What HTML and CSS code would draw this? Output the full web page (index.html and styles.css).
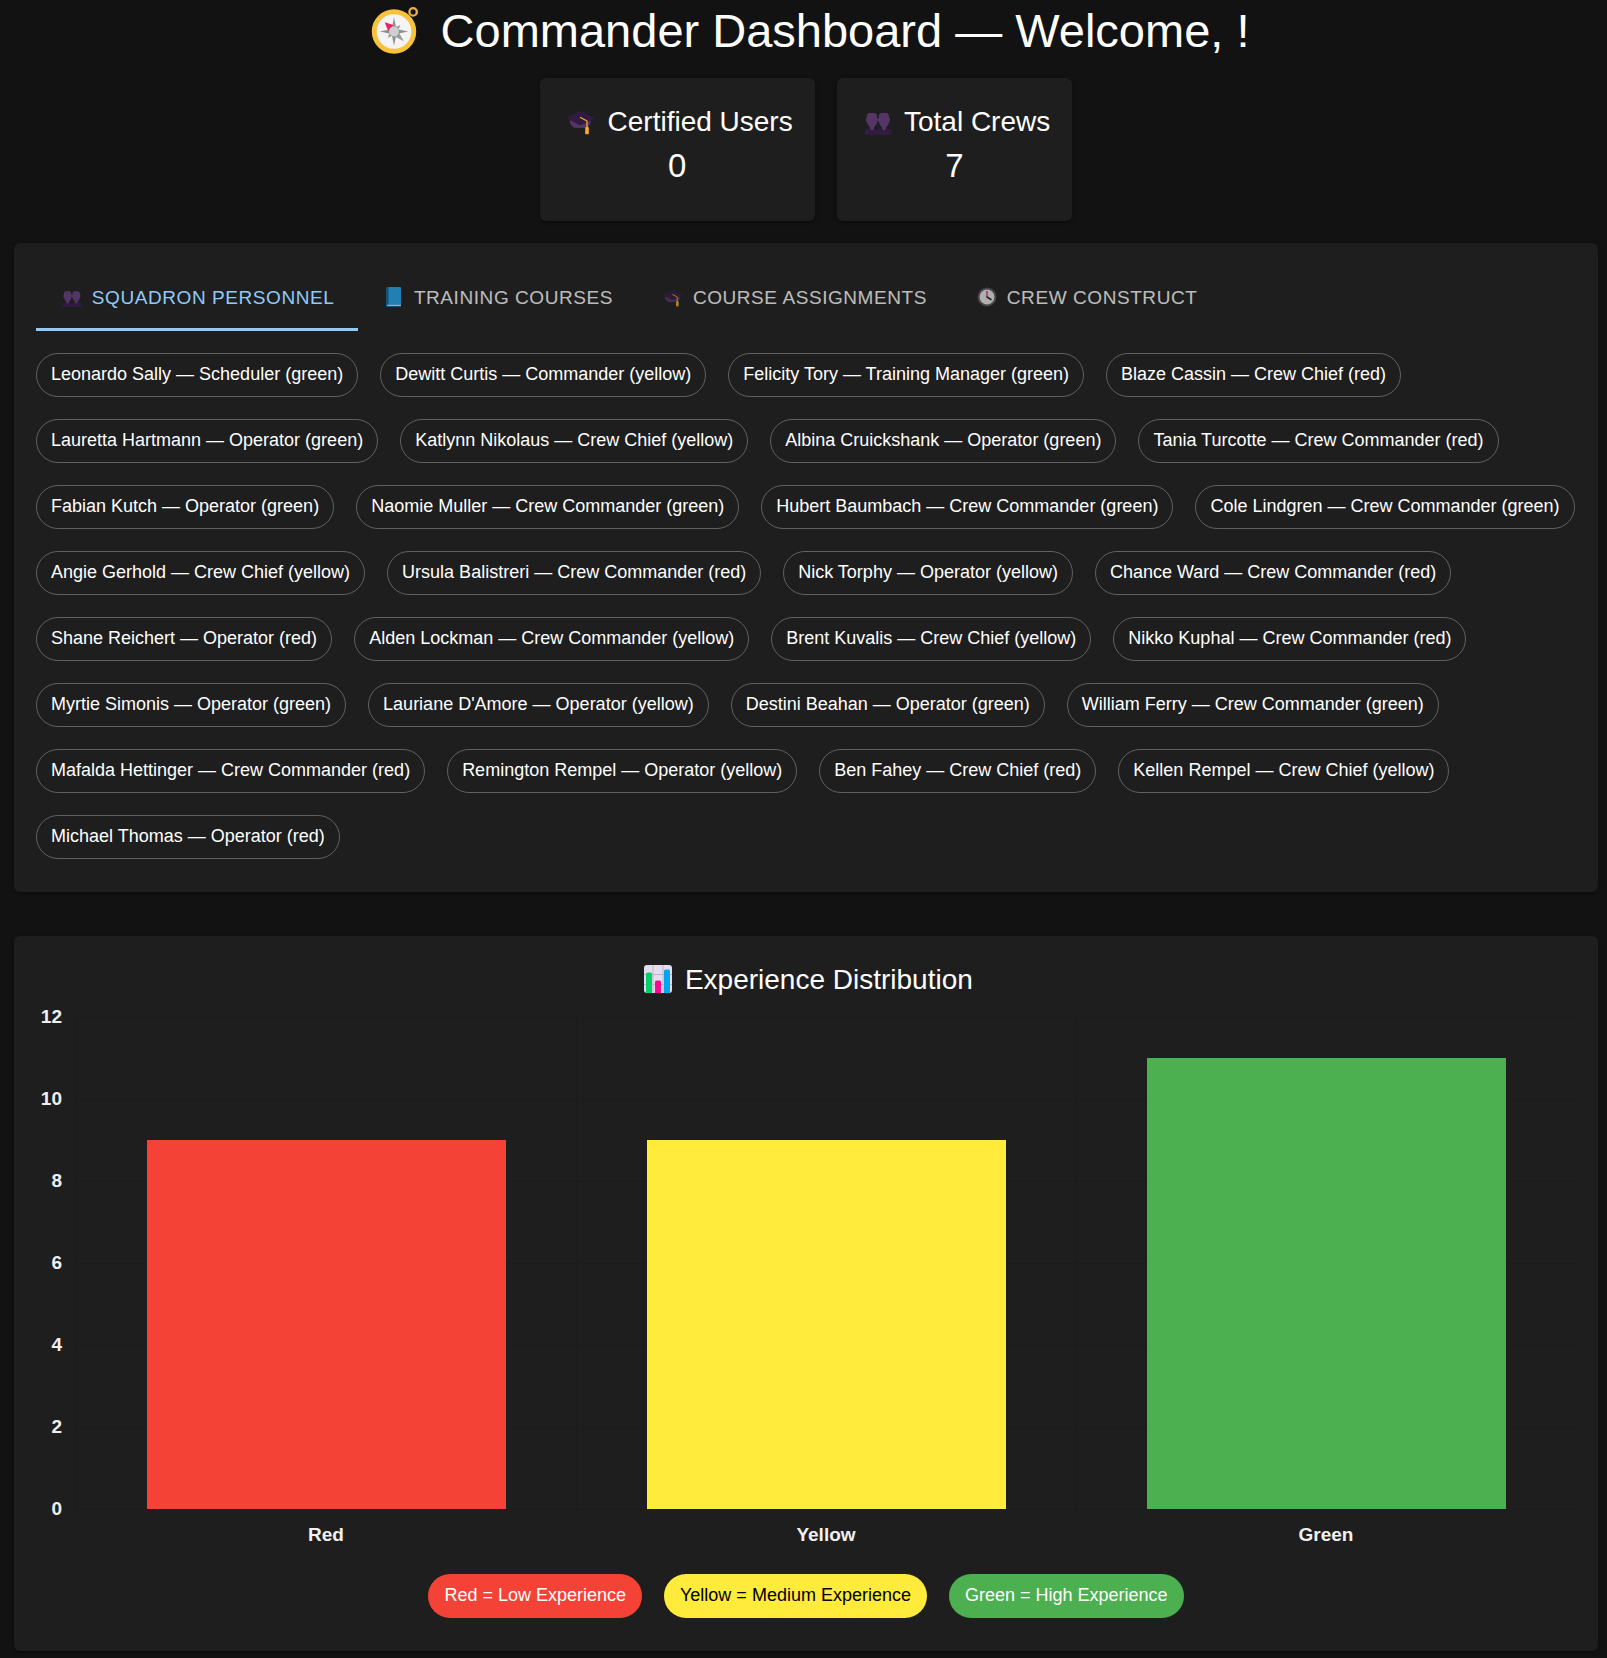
FILE: index.html
```html
<!DOCTYPE html>
<html lang="en">
<head>
<meta charset="utf-8">
<meta name="viewport" content="width=device-width, initial-scale=1">
<title>Commander Dashboard</title>
<link rel="stylesheet" href="styles.css">
</head>
<body>
<svg class="sprite" aria-hidden="true">
  <symbol id="compass" viewBox="0 0 48 48">
    <circle cx="43" cy="5" r="3.800" fill="none" stroke="#e9b040" stroke-width="2.400"/>
    <circle cx="23.500" cy="25" r="20.200" fill="#f4f4f4" stroke="#f9c23c" stroke-width="5"/>
    <path d="M23.500 10.500l2.200 11-2.200 3.500-2.200-3.500zM38 25l-11 2.200L23.500 25l3.500-2.200zM23.500 39.500l-2.200-11 2.200-3.500 2.200 3.500zM9 25l11-2.200 3.500 2.200-3.500 2.200z" fill="#8f8f8f"/>
    <path d="M30 18.500l-2.500 6-3.500-3.500zM33.500 35l-9-5 4-4zM17 31.500l2.500-6 3.500 3.500z" fill="#9b9b9b"/>
    <path d="M14 15.500l9 3-5.500 6z" fill="#e92765"/>
    <circle cx="23.500" cy="25" r="5" fill="#cfcfcf"/>
  </symbol>
  <symbol id="cap" viewBox="0 0 28 28">
    <path d="M3 12h20.500v4.500c-1.500 3-4 4.500-7 4.500h-6.500c-3.500 0-6-2-7-5.500z" fill="#533566"/>
    <path d="M12 4.500q1.500-.8 3 0l12.500 6q.5.500 0 1L15.500 17.500q-2 1-4 0L0 11.500q-.5-.5 0-1z" fill="#321b41"/>
    <path d="M13.500 10.500l6.500 3.500v8" fill="none" stroke="#f9a833" stroke-width="1.300" stroke-linecap="round" stroke-linejoin="round"/>
    <rect x="18.200" y="20" width="3.600" height="7.200" rx="1" fill="#fcab2f"/>
  </symbol>
  <symbol id="people" viewBox="0 0 28 28">
    <path d="M.5 28v-3c0-2.200 1.500-3.500 4-3.500h4.500l5 1 5-1h4.500c2.500 0 4 1.300 4 3.500v3z" fill="#321b41"/>
    <path id="head" d="M4.500 6h6.500c1.500.5 2.200 2.500 2.200 5 1.200.6 1.200 3.200 0 3.800-.4 2.700-1.700 4.400-3.200 5.400v1.500L8 23.500l-2-1.800v-1.500c-1.500-1-2.800-2.700-3.200-5.400-1.500-.6-1.500-3.200 0-3.800-.3-2.500.2-4.300 1.700-5z" fill="#533566"/>
    <use href="#head" x="12"/>
  </symbol>
  <symbol id="book" viewBox="0 0 20 20">
    <rect x="2" y="0" width="15" height="20" rx="1" fill="#15629a"/>
    <path d="M4.500 0H16a1 1 0 0 1 1 1v17H4.500z" fill="#23a8f2"/>
    <path d="M3 17.800h14v1.200H3z" fill="#e8dfec"/>
  </symbol>
  <symbol id="clock" viewBox="0 0 20 20">
    <circle cx="10" cy="10" r="8.500" fill="#ececec" stroke="#58535c" stroke-width="2"/>
    <path d="M10 4v6" stroke="#e92765" stroke-width="1.300"/>
    <path d="M10 10l4 2.500" stroke="#212121" stroke-width="1.500" stroke-linecap="round"/>
  </symbol>
  <symbol id="chart" viewBox="0 0 28 28">
    <rect width="28" height="28" rx="3" fill="#e6dcef"/>
    <path d="M9 0v28M19 0v28M0 9.500h28M0 19.500h28" stroke="#bfb3c9" stroke-width="1"/>
    <path d="M2 9q0-1.500 1.500-1.500h3Q8 7.500 8 9v19H3q-1 0-1-1z" fill="#00d26a"/>
    <path d="M11 17q0-1.500 1.500-1.500h3q1.500 0 1.500 1.500v11h-6z" fill="#f70a8d"/>
    <path d="M20 6q0-1.500 1.500-1.500h3Q26 4.500 26 6v21q0 1-1 1h-5z" fill="#00a6ed"/>
  </symbol>
</svg>

<main class="page">
  <h1 class="title"><svg class="emoji emoji-lg" aria-hidden="true"><use href="#compass"/></svg> Commander Dashboard — Welcome, !</h1>

  <section class="stats" aria-label="Totals">
    <div class="card">
      <h2 class="heading"><svg class="emoji emoji-md" aria-hidden="true"><use href="#cap"/></svg> Certified Users</h2>
      <p class="figure">0</p>
    </div>
    <div class="card">
      <h2 class="heading"><svg class="emoji emoji-md" aria-hidden="true"><use href="#people"/></svg> Total Crews</h2>
      <p class="figure">7</p>
    </div>
  </section>

  <section class="card">
    <div class="tabs" role="tablist">
      <button class="tab tab-active" type="button" role="tab" aria-selected="true"><svg class="emoji emoji-sm" aria-hidden="true"><use href="#people"/></svg> Squadron Personnel</button>
      <button class="tab" type="button" role="tab" aria-selected="false"><svg class="emoji emoji-sm" aria-hidden="true"><use href="#book"/></svg> Training Courses</button>
      <button class="tab" type="button" role="tab" aria-selected="false"><svg class="emoji emoji-sm" aria-hidden="true"><use href="#cap"/></svg> Course Assignments</button>
      <button class="tab" type="button" role="tab" aria-selected="false"><svg class="emoji emoji-sm" aria-hidden="true"><use href="#clock"/></svg> Crew Construct</button>
    </div>
    <ul class="chips">
      <li class="chip">Leonardo Sally — Scheduler (green)</li>
      <li class="chip">Dewitt Curtis — Commander (yellow)</li>
      <li class="chip">Felicity Tory — Training Manager (green)</li>
      <li class="chip">Blaze Cassin — Crew Chief (red)</li>
      <li class="chip">Lauretta Hartmann — Operator (green)</li>
      <li class="chip">Katlynn Nikolaus — Crew Chief (yellow)</li>
      <li class="chip">Albina Cruickshank — Operator (green)</li>
      <li class="chip">Tania Turcotte — Crew Commander (red)</li>
      <li class="chip">Fabian Kutch — Operator (green)</li>
      <li class="chip">Naomie Muller — Crew Commander (green)</li>
      <li class="chip">Hubert Baumbach — Crew Commander (green)</li>
      <li class="chip">Cole Lindgren — Crew Commander (green)</li>
      <li class="chip">Angie Gerhold — Crew Chief (yellow)</li>
      <li class="chip">Ursula Balistreri — Crew Commander (red)</li>
      <li class="chip">Nick Torphy — Operator (yellow)</li>
      <li class="chip">Chance Ward — Crew Commander (red)</li>
      <li class="chip">Shane Reichert — Operator (red)</li>
      <li class="chip">Alden Lockman — Crew Commander (yellow)</li>
      <li class="chip">Brent Kuvalis — Crew Chief (yellow)</li>
      <li class="chip">Nikko Kuphal — Crew Commander (red)</li>
      <li class="chip">Myrtie Simonis — Operator (green)</li>
      <li class="chip">Lauriane D'Amore — Operator (yellow)</li>
      <li class="chip">Destini Beahan — Operator (green)</li>
      <li class="chip">William Ferry — Crew Commander (green)</li>
      <li class="chip">Mafalda Hettinger — Crew Commander (red)</li>
      <li class="chip">Remington Rempel — Operator (yellow)</li>
      <li class="chip">Ben Fahey — Crew Chief (red)</li>
      <li class="chip">Kellen Rempel — Crew Chief (yellow)</li>
      <li class="chip">Michael Thomas — Operator (red)</li>
    </ul>
  </section>

  <section class="card experience">
    <h2 class="heading"><svg class="emoji emoji-md" aria-hidden="true"><use href="#chart"/></svg> Experience Distribution</h2>
    <div class="chart">
      <div class="scale">
        <span>12</span><span>10</span><span>8</span><span>6</span><span>4</span><span>2</span><span>0</span>
      </div>
      <div class="plot">
        <div class="slot"><div class="bar red" style="height: 75%"></div></div>
        <div class="slot"><div class="bar yellow" style="height: 75%"></div></div>
        <div class="slot"><div class="bar green" style="height: 91.67%"></div></div>
      </div>
      <div class="categories">
        <span>Red</span><span>Yellow</span><span>Green</span>
      </div>
    </div>
    <ul class="chips legend">
      <li class="chip chip-filled red">Red = Low Experience</li>
      <li class="chip chip-filled yellow">Yellow = Medium Experience</li>
      <li class="chip chip-filled green">Green = High Experience</li>
    </ul>
  </section>
</main>
</body>
</html>
```
FILE: styles.css
```css
* {
  box-sizing: border-box;
}

body {
  margin: 0;
  background: #121212;
  color: #fff;
  font-family: Arial, "Liberation Sans", sans-serif;
}

h1, h2, p, ul {
  margin: 0;
  padding: 0;
  font-weight: 400;
}

.sprite {
  display: none;
}

.page {
  padding: 0 9px 7px 14px;
}

.title {
  margin-bottom: 16px;
  font-size: 47px;
  line-height: 62px;
  text-align: center;
}

.emoji {
  display: inline-block;
}

.emoji-lg {
  width: 47px;
  height: 47px;
  margin: 0 10px 0 8px;
  vertical-align: -7px;
}

.emoji-md {
  width: 28px;
  height: 28px;
  margin: 0 5px;
  vertical-align: -4px;
}

.emoji-sm {
  width: 20px;
  height: 20px;
  margin: 0 4px 0 3px;
  vertical-align: -3px;
}

.card {
  padding: 22px 22px 33px;
  border-radius: 6px;
  background: #1e1e1e;
  box-shadow: 0 3px 1px -2px rgba(0, 0, 0, 0.2), 0 1px 4px rgba(0, 0, 0, 0.3);
}

.stats {
  display: flex;
  flex-wrap: wrap;
  justify-content: center;
  gap: 22px;
  margin-bottom: 22px;
}

.heading {
  font-size: 28px;
  line-height: 44px;
  text-align: center;
}

.figure {
  font-size: 33px;
  line-height: 44px;
  text-align: center;
}

.tabs {
  display: flex;
  flex-wrap: wrap;
  margin-bottom: 22px;
}

.tab {
  height: 66px;
  padding: 0 24px 0 23px;
  border: 0;
  border-top: 3px solid transparent;
  border-bottom: 3px solid transparent;
  background: none;
  color: #fff;
  font: inherit;
  font-size: 19px;
  letter-spacing: 0.03em;
  text-transform: uppercase;
  opacity: 0.7;
}

.tab-active {
  border-bottom-color: #90caf9;
  color: #90caf9;
  opacity: 1;
}

.chips {
  display: flex;
  flex-wrap: wrap;
  gap: 22px;
  list-style: none;
}

.chip {
  height: 44px;
  padding: 0 14px;
  border: 1px solid #616161;
  border-radius: 22px;
  font-size: 18px;
  line-height: 40px;
  white-space: nowrap;
}

.chip-filled {
  padding: 0 15px;
  border-color: transparent;
}

.experience {
  margin-top: 44px;
}

.chart {
  display: grid;
  grid-template-columns: 26px 1fr;
  column-gap: 14px;
  padding-top: 5px;
  margin-bottom: 22px;
  font-size: 19px;
  font-weight: 700;
  line-height: 20px;
}

.scale {
  display: flex;
  flex-direction: column;
  justify-content: space-between;
  text-align: right;
  color: #f0f0f0;
}

.plot {
  display: grid;
  grid-template-columns: repeat(3, 1fr);
  height: 493px;
  margin: 10px 0 9px;
  border-bottom: 1px solid #1b1b1b;
  background: linear-gradient(#1b1b1b 1px, transparent 1px) 0 0 / 100% calc(100% / 6);
}

.slot {
  display: flex;
  align-items: flex-end;
  justify-content: center;
  border-left: 1px solid #1b1b1b;
}

.bar {
  width: 72%;
}

.categories {
  display: grid;
  grid-column: 2;
  grid-template-columns: repeat(3, 1fr);
  padding: 6px 0 7px;
  text-align: center;
  color: #f0f0f0;
}

.legend {
  justify-content: center;
}

.red {
  background-color: #f44336;
}

.yellow {
  background-color: #ffeb3b;
  color: #000;
}

.green {
  background-color: #4caf50;
}
```
